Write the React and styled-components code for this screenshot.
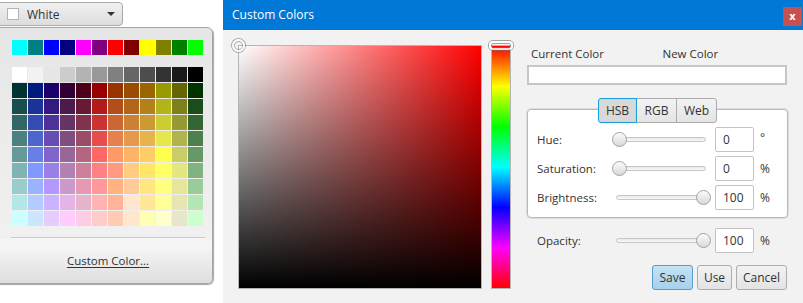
import React from "react";
import styled, { createGlobalStyle, css } from "styled-components";

const Global = createGlobalStyle`
  *, *::before, *::after { box-sizing: border-box; }
  html, body { margin: 0; padding: 0; background: #ffffff; }
  body {
    font-family: "Open Sans", "Noto Sans", "Liberation Sans", sans-serif;
    font-size: 11.5px;
    color: #333333;
  }
`;

const BASE = [
  "#00ffff", "#008080", "#0000ff", "#000080", "#ff00ff", "#800080",
  "#ff0000", "#800000", "#ffff00", "#808000", "#008000", "#00ff00",
];

const RAW = [
  [255,255,255],[242,242,242],[230,230,230],[204,204,204],[179,179,179],[153,153,153],[128,128,128],[102,102,102],[77,77,77],[51,51,51],[26,26,26],[0,0,0],
  [0,51,51],[0,26,128],[26,0,104],[51,0,51],[77,0,26],[153,0,0],[153,51,0],[153,77,0],[153,102,0],[153,153,0],[102,102,0],[0,51,0],
  [26,77,77],[26,51,153],[51,26,128],[77,26,77],[102,26,51],[179,26,26],[179,77,26],[179,102,26],[179,128,26],[179,179,26],[128,128,26],[26,77,26],
  [51,102,102],[51,77,179],[77,51,153],[102,51,102],[128,51,77],[204,51,51],[204,102,51],[204,128,51],[204,153,51],[204,204,51],[153,153,51],[51,102,51],
  [77,128,128],[77,102,204],[102,77,179],[128,77,128],[153,77,102],[230,77,77],[230,128,77],[230,153,77],[230,179,77],[230,230,77],[179,179,77],[77,128,77],
  [102,153,153],[102,128,230],[128,102,204],[153,102,153],[179,102,128],[255,102,102],[255,153,102],[255,179,102],[255,204,102],[255,255,77],[204,204,102],[102,153,102],
  [128,179,179],[128,153,255],[153,128,230],[179,128,179],[204,128,153],[255,128,128],[255,153,128],[255,204,128],[255,230,102],[255,255,102],[230,230,128],[128,179,128],
  [153,204,204],[153,179,255],[179,153,255],[204,153,204],[230,153,179],[255,153,153],[255,179,128],[255,204,153],[255,230,128],[255,255,128],[230,230,153],[153,204,153],
  [179,230,230],[179,204,255],[204,179,255],[230,179,230],[230,179,204],[255,179,179],[255,179,153],[255,230,204],[255,230,153],[255,255,153],[230,230,179],[179,230,179],
  [204,255,255],[204,230,255],[230,204,255],[255,204,255],[255,204,230],[255,204,204],[255,204,179],[255,230,204],[255,255,179],[255,255,204],[230,230,204],[204,255,204],
];

const Page = styled.div`
  display: flex;
  align-items: flex-start;
  gap: 10px;
  width: 803px;
  height: 303px;
  overflow: hidden;
`;

/* ---------- Color picker (left) ---------- */
const PickerColumn = styled.div`
  display: flex;
  flex-direction: column;
  width: 221px;
  margin-left: -8px;
  flex-shrink: 0;
`;

const ComboButton = styled.div`
  display: flex;
  align-items: center;
  width: 131px;
  height: 24px;
  margin-top: 2px;
  padding-left: 14px;
  padding-right: 7px;
  border: 1px solid #a9a9a9;
  border-radius: 0 4px 4px 0;
  background: linear-gradient(#f0f0f0, #dddddd);
`;

const SwatchBox = styled.span`
  width: 12px;
  height: 12px;
  border: 1px solid #b4b4b4;
  background: #ffffff;
`;

const ComboLabel = styled.span`
  margin-left: 8px;
  font-size: 12px;
  color: #333;
`;

const Arrow = styled.span`
  margin-left: auto;
  width: 0;
  height: 0;
  border-left: 4px solid transparent;
  border-right: 4px solid transparent;
  border-top: 4px solid #333;
`;

const Popup = styled.div`
  display: flex;
  flex-direction: column;
  height: 257px;
  margin-top: 1px;
  padding: 12px 8px 0 19px;
  border: 1px solid #a4a4a4;
  border-radius: 0 6px 6px 0;
  background: linear-gradient(#e6e6e6, #f3f3f3);
  box-shadow: 1px 1px 1px rgba(0, 0, 0, 0.35);
  overflow: hidden;
`;

const SwatchGrid = styled.div`
  display: grid;
  grid-template-columns: repeat(12, 16px);
  grid-auto-rows: 16px;
  margin-top: ${(p) => p.$mt || 0}px;
`;

const Cell = styled.div`
  width: 15px;
  height: 15px;
  background: ${(p) => p.$c};
`;

const Separator = styled.div`
  height: 1px;
  margin: 10px 0 0 -1px;
  width: 194px;
  background: #c9c9c9;
  box-shadow: 0 1px 0 #fafafa;
`;

const CustomArea = styled.div`
  flex: 1;
  display: flex;
  align-items: center;
  justify-content: center;
  margin: 1px -8px 0 -19px;
  padding: 0 8px 2px 19px;
  background: linear-gradient(#f5f5f5 20%, #dedede);
`;

const CustomLink = styled.span`
  font-size: 11.5px;
  color: #333;
  text-decoration: underline;
  text-underline-offset: 2px;
`;

/* ---------- Dialog (right) ---------- */
const Dialog = styled.div`
  display: flex;
  flex-direction: column;
  width: 580px;
  height: 303px;
  flex-shrink: 0;
`;

const TitleBar = styled.div`
  display: flex;
  align-items: flex-start;
  height: 30px;
  padding-left: 9px;
  background: #0078d7;
`;

const Title = styled.span`
  line-height: 29px;
  font-size: 12px;
  color: #ffffff;
`;

const CloseButton = styled.span`
  display: flex;
  align-items: center;
  justify-content: center;
  width: 19px;
  height: 19px;
  margin: 7px 1px 0 auto;
  background: #c75050;
  color: #ffffff;
  font-family: "DejaVu Sans", sans-serif;
  font-weight: bold;
  font-size: 10px;
  line-height: 1;
`;

const DialogBody = styled.div`
  flex: 1;
  display: flex;
  align-items: flex-start;
  padding: 15px 0 0 15px;
  background: #f2f2f2;
`;

const ColorArea = styled.div`
  display: flex;
  gap: 9px;
`;

const SBRect = styled.div`
  position: relative;
  width: 244px;
  height: 244px;
  border: 1px solid #b5b5b5;
  background:
    linear-gradient(to top, #000000, rgba(0, 0, 0, 0)),
    linear-gradient(to right, #ffffff, #ff0000);
`;

const SBHandle = styled.span`
  position: absolute;
  left: -7px;
  top: -7px;
  width: 13px;
  height: 13px;
  border-radius: 50%;
  border: 2px solid rgba(255, 255, 255, 0.8);
  box-shadow: 0 0 0 1px rgba(120, 120, 120, 0.6), inset 0 0 0 1px rgba(120, 120, 120, 0.6);
`;

const HueBar = styled.div`
  position: relative;
  width: 20px;
  height: 244px;
  border: 1px solid #b5b5b5;
  background: linear-gradient(
    to bottom,
    #ff0000 0%,
    #ffff00 16.67%,
    #00ff00 33.33%,
    #00ffff 50%,
    #0000ff 66.67%,
    #ff00ff 83.33%,
    #ff0000 100%
  );
`;

const HueHandle = styled.span`
  position: absolute;
  left: -3px;
  top: -5px;
  width: 24px;
  height: 9px;
  border-radius: 4px;
  border: 2px solid rgba(255, 255, 255, 0.85);
  box-shadow: 0 0 0 1px rgba(110, 110, 110, 0.6), inset 0 0 0 1px rgba(110, 110, 110, 0.6);
`;

const Controls = styled.div`
  display: flex;
  flex-direction: column;
  width: 261px;
  margin-left: 16px;
  padding-top: 1px;
`;

const PreviewLabels = styled.div`
  display: grid;
  grid-template-columns: 1fr 1fr;
  height: 16px;
  line-height: 16px;
`;

const PreviewLabel = styled.span`
  padding-left: ${(p) => p.$pl}px;
  color: #333;
`;

const PreviewBox = styled.div`
  display: grid;
  grid-template-columns: 1fr 1fr;
  height: 20px;
  margin-top: 3px;
  margin-right: 1px;
  border: 2px solid #c6c6c6;
`;

const PreviewHalf = styled.div`
  background: ${(p) => p.$c};
`;

const Tabs = styled.div`
  position: relative;
  z-index: 1;
  display: flex;
  justify-content: center;
  margin-top: 13px;
  padding-left: 1px;
`;

const Tab = styled.div`
  display: flex;
  align-items: center;
  justify-content: center;
  width: ${(p) => p.$w}px;
  height: 25px;
  margin-left: -1px;
  border: 1px solid #acacac;
  background: linear-gradient(#f3f3f3, #e4e4e4);
  color: #333;
  font-size: 12px;
  &:first-child { border-radius: 3px 0 0 3px; }
  &:last-child { border-radius: 0 3px 3px 0; }
  ${(p) =>
    p.$active &&
    css`
      position: relative;
      z-index: 1;
      border-color: #1a9fdc;
      background: #d9d9d9;
      box-shadow: inset 0 0 0 1px #c0d9e8;
    `}
`;

const SettingsBox = styled.div`
  display: flex;
  flex-direction: column;
  gap: 4px;
  height: 109px;
  margin-top: -14px;
  margin-right: 0;
  padding: 17px 0 0 9px;
  border: 1px solid #b9b9b9;
  border-radius: 4px;
  background: #ffffff;
  box-shadow: 0 0 0 1px #dedede;
`;

const Row = styled.div`
  display: flex;
  align-items: center;
  height: 25px;
  padding-left: ${(p) => p.$pl || 0}px;
`;

const RowLabel = styled.span`
  width: 75px;
  color: #333;
`;

const SliderWrap = styled.div`
  position: relative;
  width: 99px;
  height: 15px;
  display: flex;
  align-items: center;
  padding: 0 5px 0 4px;
`;

const Track = styled.div`
  width: 100%;
  height: 5px;
  border-radius: 3px;
  border: 1px solid #c6c6c6;
  background: linear-gradient(#e9e9e9, #f8f8f8);
`;

const Thumb = styled.span`
  position: absolute;
  top: 0;
  width: 15px;
  height: 15px;
  border-radius: 50%;
  border: 1px solid #a2a2a2;
  background: linear-gradient(#fbfbfb, #d9d9d9);
`;

const Field = styled.div`
  display: flex;
  align-items: center;
  width: 39px;
  height: 25px;
  margin-left: 4px;
  padding-left: 7px;
  border: 1px solid #c3c3c3;
  border-radius: 2px;
  background: #ffffff;
  color: #333;
  font-size: 12px;
`;

const Unit = styled.span`
  margin-left: 6px;
  font-size: 12px;
  color: #333;
  align-self: ${(p) => (p.$top ? "flex-start" : "center")};
  margin-top: ${(p) => (p.$top ? 2 : 0)}px;
`;

const ButtonRow = styled.div`
  display: flex;
  justify-content: flex-end;
  gap: 4px;
  margin-top: 12px;
  padding-right: 1px;
`;

const Button = styled.div`
  display: flex;
  align-items: center;
  justify-content: center;
  width: ${(p) => p.$w}px;
  height: 25px;
  border: 1px solid #adadad;
  border-radius: 3px;
  background: linear-gradient(#f2f2f2, #e3e3e3);
  color: #333;
  font-size: 12px;
  ${(p) =>
    p.$primary &&
    css`
      border-color: #5b9dc9;
      background: linear-gradient(#c3e2f5, #a6d1ec);
    `}
`;

function Slider({ value }) {
  const left = (value / 100) * 84;
  return (
    <SliderWrap>
      <Track />
      <Thumb style={{ left: `${left}px` }} />
    </SliderWrap>
  );
}

function SettingRow({ label, value, pct, unit, pl }) {
  return (
    <Row $pl={pl}>
      <RowLabel>{label}</RowLabel>
      <Slider value={pct} />
      <Field>{value}</Field>
      <Unit $top={unit === "°"}>{unit}</Unit>
    </Row>
  );
}

export default function App() {
  return (
    <>
      <Global />
      <Page>
        <PickerColumn>
          <ComboButton>
            <SwatchBox />
            <ComboLabel>White</ComboLabel>
            <Arrow />
          </ComboButton>
          <Popup>
            <SwatchGrid>
              {BASE.map((c, i) => (
                <Cell key={i} $c={c} />
              ))}
            </SwatchGrid>
            <SwatchGrid $mt={11}>
              {RAW.map((c, i) => (
                <Cell key={i} $c={`rgb(${c[0]},${c[1]},${c[2]})`} />
              ))}
            </SwatchGrid>
            <Separator />
            <CustomArea>
              <CustomLink>Custom Color...</CustomLink>
            </CustomArea>
          </Popup>
        </PickerColumn>

        <Dialog>
          <TitleBar>
            <Title>Custom Colors</Title>
            <CloseButton>x</CloseButton>
          </TitleBar>
          <DialogBody>
            <ColorArea>
              <SBRect>
                <SBHandle />
              </SBRect>
              <HueBar>
                <HueHandle />
              </HueBar>
            </ColorArea>
            <Controls>
              <PreviewLabels>
                <PreviewLabel $pl={4}>Current Color</PreviewLabel>
                <PreviewLabel $pl={5}>New Color</PreviewLabel>
              </PreviewLabels>
              <PreviewBox>
                <PreviewHalf $c="#ffffff" />
                <PreviewHalf $c="#ffffff" />
              </PreviewBox>
              <Tabs>
                <Tab $w={39} $active>HSB</Tab>
                <Tab $w={41}>RGB</Tab>
                <Tab $w={41}>Web</Tab>
              </Tabs>
              <SettingsBox>
                <SettingRow label="Hue:" value="0" pct={0} unit="°" />
                <SettingRow label="Saturation:" value="0" pct={0} unit="%" />
                <SettingRow label="Brightness:" value="100" pct={100} unit="%" />
              </SettingsBox>
              <Row $pl={10} style={{ marginTop: 10 }}>
                <RowLabel>Opacity:</RowLabel>
                <Slider value={100} />
                <Field>100</Field>
                <Unit>%</Unit>
              </Row>
              <ButtonRow>
                <Button $w={41} $primary>Save</Button>
                <Button $w={35}>Use</Button>
                <Button $w={51}>Cancel</Button>
              </ButtonRow>
            </Controls>
          </DialogBody>
        </Dialog>
      </Page>
    </>
  );
}
